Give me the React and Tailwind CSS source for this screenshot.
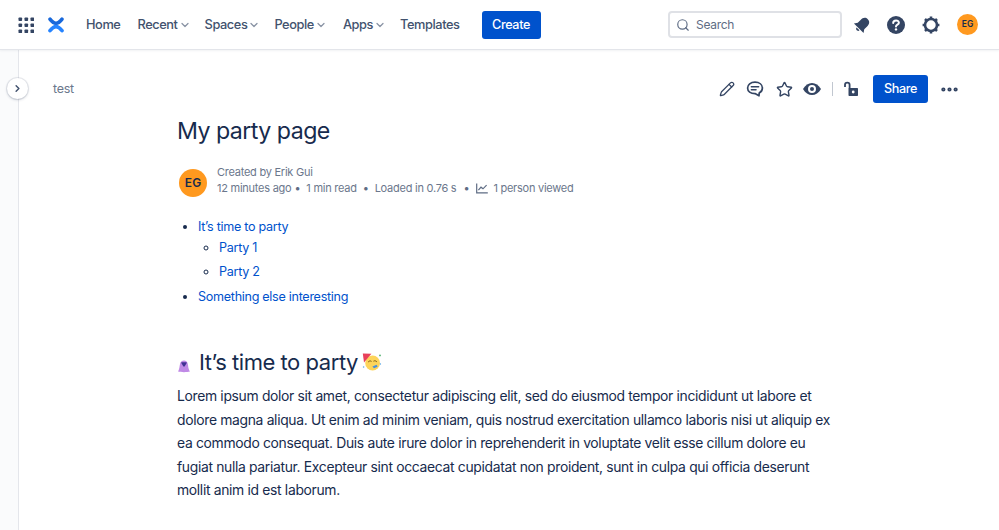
import { ChevronDown, ChevronRight, Search, Pencil, Star, MoreHorizontal } from 'lucide-react'

const NavItem = ({ label, menu }) => (
  <div className="flex items-center">
    <span className="text-[12.8px] font-medium tracking-[-0.42px] text-[#42526e]">{label}</span>
    {menu && <ChevronDown className="-mr-[3px] ml-[1px] size-[12px] text-[#8993a4]" strokeWidth={2.5} aria-hidden="true" />}
  </div>
)

const AppSwitcher = () => (
  <svg width="16" height="16" viewBox="0 0 16 16" fill="#344563" aria-hidden="true">
    {[0, 6, 12].map((y) =>
      [0, 6, 12].map((x) => <rect key={`${x}-${y}`} x={x + 0.5} y={y + 0.5} width="3.6" height="3.6" rx="0.8" />),
    )}
  </svg>
)

const Logo = () => (
  <svg width="16" height="16" viewBox="0 0 16 16" fill="none" strokeWidth="3.6" strokeLinecap="round" aria-hidden="true">
    <path d="M2 2.2 C4.4 5.4 6 6.4 8 6.4 C10 6.4 11.6 5.4 14 2.2" stroke="#1868db" />
    <path d="M2 13.6 C4.4 10.6 6 9.6 8 9.6 C10 9.6 11.6 10.6 14 13.6" stroke="#2684ff" />
  </svg>
)

const Bell = () => (
  <svg width="18" height="18" viewBox="0 0 18 18" fill="#344563" aria-hidden="true">
    <g transform="rotate(45 9 9)">
      <path d="M9 0.8 C5.6 0.8 4.4 3.4 4.4 6.4 V10.4 L2.2 13.6 H15.8 L13.6 10.4 V6.4 C13.6 3.4 12.4 0.8 9 0.8 Z" />
      <path d="M7 14.6 H11 C11 17 7 17 7 14.6 Z" />
    </g>
  </svg>
)

const Help = () => (
  <svg width="20" height="20" viewBox="0 0 20 20" aria-hidden="true">
    <circle cx="10" cy="10" r="9" fill="#344563" />
    <path d="M7.2 7.9 C7.2 4.6 12.9 4.6 12.9 7.8 C12.9 9.8 10 9.6 10 11.6" fill="none" stroke="#fff" strokeWidth="2" strokeLinecap="round" />
    <circle cx="10" cy="14.4" r="1.2" fill="#fff" />
  </svg>
)

const Gear = () => (
  <svg width="20" height="20" viewBox="0 0 20 20" fill="none" stroke="#344563" aria-hidden="true">
    <circle cx="10" cy="10" r="6" strokeWidth="2.6" />
    <path d="M10 1.6 V4 M10 16 V18.4 M1.6 10 H4 M16 10 H18.4 M4 4 L5.6 5.6 M14.4 14.4 L16 16 M4 16 L5.6 14.4 M14.4 5.6 L16 4" strokeWidth="2.6" />
  </svg>
)

const Comment = () => (
  <svg width="18" height="18" viewBox="0 0 18 18" fill="none" stroke="#344563" strokeWidth="1.7" aria-hidden="true">
    <path d="M9 2.2 C4.6 2.2 1.6 4.6 1.6 8 C1.6 11.4 4.6 13.6 9 13.6 L13 15.8 L13.2 13 C15.2 12 16.4 10.2 16.4 8 C16.4 4.6 13.4 2.2 9 2.2 Z" strokeLinejoin="round" />
    <path d="M5.4 6.8 H12.6 M5.4 9.8 H10" strokeWidth="1.6" strokeLinecap="round" />
  </svg>
)

const EyeIcon = () => (
  <svg width="18" height="12" viewBox="0 0 18 12" aria-hidden="true">
    <path d="M0 6 C2.4 2 5.4 0 9 0 C12.6 0 15.6 2 18 6 C15.6 10 12.6 12 9 12 C5.4 12 2.4 10 0 6 Z" fill="#344563" />
    <circle cx="9" cy="6" r="3" fill="none" stroke="#fff" strokeWidth="2" />
  </svg>
)

const Unlock = () => (
  <svg width="16" height="16" viewBox="0 0 16 16" fill="none" aria-hidden="true">
    <path d="M2 6 V3.8 C2 1 6.6 1 6.6 3.8 V7" stroke="#344563" strokeWidth="1.8" />
    <path d="M5.5 7 H14 C14.6 7 15 7.4 15 8 V14 C15 14.6 14.6 15 14 15 H6.5 C5.9 15 5.5 14.6 5.5 14 Z" fill="#344563" />
    <circle cx="10.2" cy="11" r="1.4" fill="#fff" />
  </svg>
)

const Chart = () => (
  <svg width="12" height="11" viewBox="0 0 12 11" fill="none" stroke="#5e6c84" strokeWidth="1.2" aria-hidden="true">
    <path d="M0.7 0.5 V9.8 H11.8" />
    <path d="M2.4 7.2 L5 4.2 L7 5.8 L10.6 2.2" />
  </svg>
)

const Blob = () => (
  <svg width="14" height="14" viewBox="0 0 14 14" aria-hidden="true">
    <path d="M1 12.6 C1.8 11 2.4 9.5 2.8 6 C3.2 2.8 5 1.6 7 1.6 C9 1.6 10.6 2.8 11 6 C11.3 9.5 12 11 13 12.6 C10 13.4 4 13.4 1 12.6 Z" fill="#c08ae6" />
    <path d="M4 3.6 C5.4 3 8.6 3 10 3.6 L7.6 7.6 H6.4 Z" fill="#403294" />
  </svg>
)

const PartyFace = () => (
  <svg width="20" height="20" viewBox="0 0 20 20" aria-hidden="true">
    <circle cx="10.6" cy="11" r="7.4" fill="#fdd45a" />
    <path d="M0.8 1.4 L9.4 1.8 L2 10.4 Z" fill="#e8415a" />
    <path d="M6.4 9.8 C7.2 8.8 8.2 8.6 9.2 9.2 M11.8 9 C12.8 8.4 13.8 8.8 14.6 9.6" stroke="#7a5a14" strokeWidth="1" fill="none" strokeLinecap="round" />
    <path d="M10.4 14.6 L14.6 12.8 L15.6 14.8 L12 16.2 Z" fill="#4a90d9" />
    <circle cx="18" cy="3.4" r="0.9" fill="#4fb06d" />
    <circle cx="1.6" cy="15" r="0.8" fill="#5aa9e6" />
    <circle cx="18.4" cy="12" r="0.7" fill="#5aa9e6" />
  </svg>
)

const ListLink = ({ children }) => <a className="text-[#0052cc]">{children}</a>

const Dot = () => <span className="text-[#5e6c84]">•</span>

const App = () => (
  <div className="flex h-[530px] w-[999px] flex-col overflow-hidden bg-white font-['Inter',sans-serif] text-[#172b4d] antialiased">
    <header className="z-10 flex h-[50px] shrink-0 items-center border-b border-[#e3e5ea] bg-white pl-[18px] pr-[21px] shadow-[0_1px_2px_rgba(9,30,66,0.06)]">
      <AppSwitcher />
      <div className="ml-[14px]">
        <Logo />
      </div>
      <nav className="ml-[22px] flex items-center gap-[17px]">
        <NavItem label="Home" />
        <NavItem label="Recent" menu />
        <NavItem label="Spaces" menu />
        <NavItem label="People" menu />
        <div className="ml-[2px]">
          <NavItem label="Apps" menu />
        </div>
        <NavItem label="Templates" />
      </nav>
      <button className="ml-[22px] flex h-[28px] w-[59px] items-center justify-center rounded-[3px] bg-[#0052cc] pt-[1px] text-[12.6px] font-medium tracking-[-0.33px] text-white">
        Create
      </button>
      <div className="ml-auto flex h-[27px] w-[174px] items-center rounded-[4px] border-2 border-[#dfe1e6] pl-[6px] text-[12px] tracking-[-0.28px] text-[#5e6c84]">
        <Search className="size-[14px] text-[#5e6c84]" strokeWidth={2} aria-hidden="true" />
        <span className="ml-[6px]">Search</span>
      </div>
      <div className="ml-[11px] flex items-center">
        <Bell />
        <div className="ml-[15px]">
          <Help />
        </div>
        <div className="ml-[15px]">
          <Gear />
        </div>
        <div className="ml-[16px] grid size-[21px] place-items-center rounded-full bg-[#ff991f] text-[8.5px] font-semibold text-[#172b4d]">
          EG
        </div>
      </div>
    </header>

    <div className="flex min-h-0 flex-1">
      <aside className="relative w-[19px] shrink-0 border-r border-[#e4e6eb] bg-[#fafbfc]">
        <button className="absolute left-[7px] top-[28px] grid size-[21px] place-items-center rounded-full bg-white text-[#42526e] shadow-[0_0_0_1px_rgba(9,30,66,0.08),0_1px_3px_rgba(9,30,66,0.2)]">
          <ChevronRight className="size-[11px]" strokeWidth={3.2} aria-hidden="true" />
        </button>
      </aside>

      <main className="min-w-0 flex-1">
        <div className="flex items-center pl-[34px] pr-[39px] pt-[25px]">
          <span className="mt-[1px] text-[12.5px] tracking-[-0.3px] text-[#6b778c]">test</span>
          <div className="ml-auto flex items-center text-[#344563]">
            <Pencil className="size-[16px]" strokeWidth={1.9} aria-hidden="true" />
            <div className="ml-[11px]">
              <Comment />
            </div>
            <Star className="ml-[12px] size-[17px]" strokeWidth={2} aria-hidden="true" />
            <div className="ml-[10px]">
              <EyeIcon />
            </div>
            <div className="ml-[11px] h-[14px] w-[1px] bg-[#c1c7d0]" />
            <div className="ml-[10px]">
              <Unlock />
            </div>
            <button className="ml-[14px] flex h-[28px] w-[55px] items-center justify-center rounded-[3px] bg-[#0052cc] pt-[1px] text-[12.6px] font-medium tracking-[-0.33px] text-white">
              Share
            </button>
            <MoreHorizontal className="ml-[11px] size-[21px]" strokeWidth={2.8} aria-hidden="true" />
          </div>
        </div>

        <div className="pl-[158px] pr-[160px]">
          <h1 className="mt-[12px] text-[23.2px] leading-[32px] font-normal tracking-[-0.55px]">My party page</h1>

          <div className="mt-[17px] flex items-start">
            <div className="ml-[2px] mt-[5px] grid size-[28px] place-items-center rounded-full bg-[#ff991f] text-[12px] font-semibold">
              EG
            </div>
            <div className="ml-[10px] text-[11px] leading-[16px] tracking-[-0.25px] text-[#6b778c]">
              <p>Created by Erik Gui</p>
              <p className="flex items-center">
                12 minutes ago
                <span className="ml-[3px]"><Dot /></span>
                <span className="ml-[6px]">1 min read</span>
                <span className="ml-[6px]"><Dot /></span>
                <span className="ml-[6px]">Loaded in 0.76 s</span>
                <span className="ml-[7px]"><Dot /></span>
                <span className="ml-[7px]"><Chart /></span>
                <span className="ml-[5px]">1 person viewed</span>
              </p>
            </div>
          </div>

          <ul className="mt-[20px] list-disc pl-[21px] text-[12.6px] leading-[20px] tracking-[-0.3px] marker:text-[#172b4d]">
            <li>
              <ListLink>It’s time to party</ListLink>
              <ul className="list-[circle] pl-[21px]">
                <li className="mt-[1px]"><ListLink>Party 1</ListLink></li>
                <li className="mt-[4px]"><ListLink>Party 2</ListLink></li>
              </ul>
            </li>
            <li className="mt-[5px]"><ListLink>Something else interesting</ListLink></li>
          </ul>

          <h2 className="mt-[40px] flex items-center text-[22px] leading-[30px] font-normal tracking-[-0.45px]">
            <span className="mt-[8px]"><Blob /></span>
            <span className="ml-[8px]">It’s time to party</span>
            <span className="ml-[4px]"><PartyFace /></span>
          </h2>

          <p className="mt-[8px] text-[13.9px] leading-[23.6px] tracking-[-0.33px]">
            Lorem ipsum dolor sit amet, consectetur adipiscing elit, sed do eiusmod tempor incididunt ut labore et dolore magna aliqua. Ut enim ad minim veniam, quis nostrud exercitation ullamco laboris nisi ut aliquip ex ea commodo consequat. Duis aute irure dolor in reprehenderit in voluptate velit esse cillum dolore eu fugiat nulla pariatur. Excepteur sint occaecat cupidatat non proident, sunt in culpa qui officia deserunt mollit anim id est laborum.
          </p>
        </div>
      </main>
    </div>
  </div>
)

export default App
